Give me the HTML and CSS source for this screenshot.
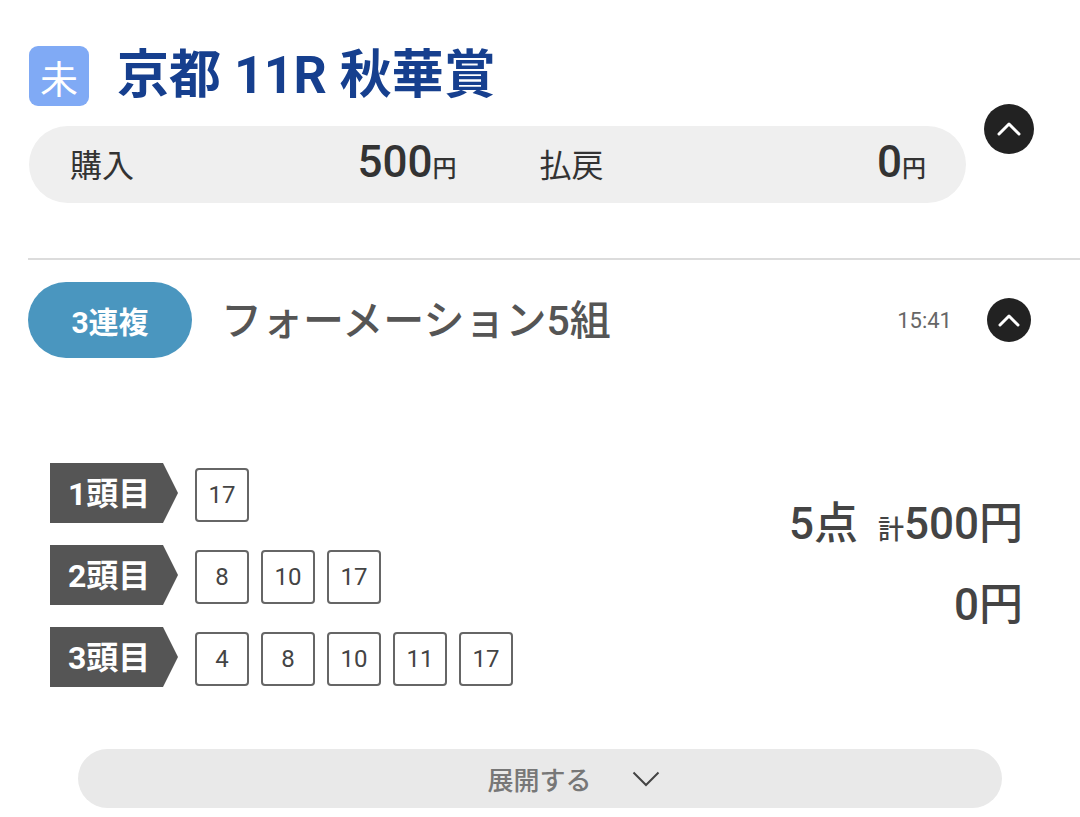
FILE: index.html
```html
<!DOCTYPE html>
<html lang="ja">
<head>
    <meta charset="UTF-8">
    <meta name="viewport" content="width=device-width, initial-scale=1.0">
    <title>京都 11R 秋華賞</title>
    <link rel="stylesheet" href="styles.css">
</head>
<body>
    <div class="page">
        <section class="race">
            <div class="race-main">
                <div class="race-head">
                    <span class="badge">未</span>
                    <h1 class="race-title">京都 11R 秋華賞</h1>
                </div>
                <div class="summary">
                    <div class="sum-item">
                        <span class="sum-label">購入</span>
                        <span class="sum-value">500<small>円</small></span>
                    </div>
                    <div class="sum-item">
                        <span class="sum-label">払戻</span>
                        <span class="sum-value">0<small>円</small></span>
                    </div>
                </div>
            </div>
            <button class="toggle toggle-lg" aria-label="閉じる">
                <svg width="24" height="14" viewBox="0 0 24 14"><polyline points="2,12 12,2 22,12" fill="none" stroke="#fff" stroke-width="3" stroke-linecap="round" stroke-linejoin="round"/></svg>
            </button>
        </section>

        <hr class="divider">

        <section class="bet">
            <div class="bet-head">
                <span class="bet-type">3連複</span>
                <span class="bet-name">フォーメーション5組</span>
                <span class="bet-time">15:41</span>
                <button class="toggle" aria-label="閉じる">
                    <svg width="22" height="13" viewBox="0 0 22 13"><polyline points="2,11 11,2 20,11" fill="none" stroke="#fff" stroke-width="3" stroke-linecap="round" stroke-linejoin="round"/></svg>
                </button>
            </div>

            <div class="bet-body">
                <div class="legs">
                    <div class="leg">
                        <span class="leg-tag">1頭目</span>
                        <span class="num">17</span>
                    </div>
                    <div class="leg">
                        <span class="leg-tag">2頭目</span>
                        <span class="num">8</span>
                        <span class="num">10</span>
                        <span class="num">17</span>
                    </div>
                    <div class="leg">
                        <span class="leg-tag">3頭目</span>
                        <span class="num">4</span>
                        <span class="num">8</span>
                        <span class="num">10</span>
                        <span class="num">11</span>
                        <span class="num">17</span>
                    </div>
                </div>
                <div class="bet-total">
                    <p class="total-line"><span class="points">5点</span><small>計</small>500円</p>
                    <p class="total-line">0円</p>
                </div>
            </div>

            <button class="expand">
                <span>展開する</span>
                <svg width="28" height="16" viewBox="0 0 28 16"><polyline points="1.5,1.5 14,14 26.5,1.5" fill="none" stroke="#444" stroke-width="2"/></svg>
            </button>
        </section>
    </div>
</body>
</html>
```

FILE: styles.css
```css
* {
    margin: 0;
    padding: 0;
    box-sizing: border-box;
}

body {
    font-family: Roboto, "Noto Sans CJK JP", sans-serif;
    background-color: #fff;
    color: #333;
}

.page {
    padding: 46px 0 0 28px;
}

/* レース見出し */
.race {
    display: flex;
    align-items: flex-start;
}

.race-main {
    width: 938px;
}

.race-head {
    display: flex;
    align-items: center;
    height: 60px;
    padding-left: 1px;
}

.badge {
    width: 60px;
    height: 60px;
    border-radius: 9px;
    background-color: #80aaf5;
    color: #fff;
    font-size: 38px;
    display: flex;
    align-items: center;
    justify-content: center;
}

.race-title {
    margin-left: 28px;
    font-size: 52px;
    font-weight: 700;
    color: #163f8e;
    line-height: 1;
}

.summary {
    margin-top: 20px;
    margin-left: 1px;
    height: 77px;
    border-radius: 39px;
    background-color: #efefef;
    display: flex;
    align-items: center;
    gap: 83px;
    padding: 0 40px 6px 41px;
}

.sum-item {
    flex: 1;
    display: flex;
    justify-content: space-between;
    align-items: baseline;
}

.sum-label {
    font-size: 32px;
    color: #333;
}

.sum-value {
    font-size: 44px;
    font-weight: 500;
    color: #333;
}

.sum-value small {
    font-size: 24px;
}

.toggle {
    flex-shrink: 0;
    width: 44px;
    height: 44px;
    border: none;
    border-radius: 50%;
    background-color: #222;
    display: flex;
    align-items: center;
    justify-content: center;
    cursor: pointer;
}

.toggle-lg {
    width: 50px;
    height: 50px;
    margin: 58px 0 0 18px;
}

.divider {
    border: none;
    border-top: 2px solid #dcdcdc;
    margin-top: 55px;
}

/* 買い目 */
.bet-head {
    display: flex;
    align-items: center;
    margin-top: 22px;
    padding-right: 49px;
}

.bet-type {
    width: 164px;
    height: 76px;
    border-radius: 38px;
    background-color: #4a96bf;
    color: #fff;
    font-size: 30px;
    font-weight: 700;
    display: flex;
    align-items: center;
    justify-content: center;
}

.bet-name {
    margin: 0 0 6px 29px;
    font-size: 41px;
    font-weight: 500;
    color: #555;
}

.bet-time {
    margin-left: auto;
    margin-right: 35px;
    font-size: 22px;
    color: #666;
}

.bet-body {
    display: flex;
    justify-content: space-between;
    margin-top: 105px;
    padding: 0 57px 0 22px;
}

.legs {
    display: flex;
    flex-direction: column;
    gap: 22px;
}

.leg {
    display: flex;
    align-items: center;
    gap: 12px;
    height: 60px;
}

.leg-tag {
    width: 128px;
    height: 60px;
    margin-right: 5px;
    padding: 0 0 4px 18px;
    background-color: #555;
    color: #fff;
    font-size: 32px;
    font-weight: 700;
    display: flex;
    align-items: center;
    clip-path: polygon(0 0, 113px 0, 100% 50%, 113px 100%, 0 100%);
}

.num {
    width: 54px;
    height: 54px;
    margin-top: 4px;
    border: 2px solid #666;
    border-radius: 4px;
    color: #444;
    font-size: 24px;
    display: flex;
    align-items: center;
    justify-content: center;
}

.bet-total {
    margin-top: 24px;
    text-align: right;
    color: #444;
}

.total-line {
    font-size: 44px;
    font-weight: 500;
    line-height: 75px;
}

.total-line .points {
    margin-right: 20px;
}

.total-line small {
    font-size: 26px;
}

.expand {
    width: 924px;
    height: 59px;
    margin: 62px 0 0 50px;
    border: none;
    border-radius: 30px;
    background-color: #e9e9e9;
    color: #777;
    font-family: inherit;
    font-size: 26px;
    font-weight: 500;
    display: flex;
    align-items: center;
    justify-content: center;
    gap: 40px;
    padding-left: 67px;
    cursor: pointer;
}
```
